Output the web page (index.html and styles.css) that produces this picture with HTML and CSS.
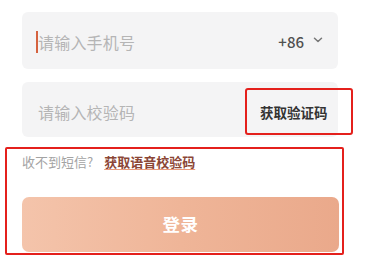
FILE: index.html
```html
<!DOCTYPE html>
<html lang="zh">
<head>
<meta charset="utf-8">
<link rel="stylesheet" href="styles.css">
</head>
<body>
<div class="form">
  <div class="field field-phone">
    <span class="cursor"></span>
    <span class="placeholder">请输入手机号</span>
    <span class="code">+86</span>
    <svg class="chev" width="10" height="6" viewBox="0 0 10 6"><path d="M1.5 1.2 L5 4.5 L8.5 1.2" fill="none" stroke="#777" stroke-width="1.5" stroke-linecap="round" stroke-linejoin="round"/></svg>
  </div>
  <div class="field field-verify">
    <span class="placeholder">请输入校验码</span>
    <span class="get-code">获取验证码</span>
  </div>
  <div class="mark-box">
    <div class="hint-row">
      <span class="hint">收不到短信?</span>
      <span class="voice-link">获取语音校验码</span>
    </div>
    <div class="login-btn">登录</div>
  </div>
</div>
</body>
</html>
```
FILE: styles.css
```css
* { box-sizing: border-box; }
html, body {
  margin: 0;
  padding: 0;
  background: #ffffff;
  font-family: "Noto Sans CJK SC", "Noto Sans", sans-serif;
}
.form {
  width: 367px;
  padding-top: 12px;
}
.field {
  margin-left: 22px;
  width: 316px;
  background: #f4f4f5;
  border-radius: 6px;
  display: flex;
  align-items: center;
}
.field-phone {
  height: 57px;
  padding: 2px 15px 0 14px;
}
.cursor {
  width: 2px;
  height: 22px;
  background: #d5623f;
}
.placeholder {
  font-size: 16px;
  color: #b5b5b5;
  line-height: 22px;
  flex: 1;
  letter-spacing: 0.2px;
}
.code {
  font-size: 15px;
  color: #505050;
  font-weight: 500;
  line-height: 20px;
}
.chev {
  margin-left: 9px;
  margin-top: -3px;
}
.field-verify {
  margin-top: 13px;
  height: 55px;
  padding-left: 16px;
}
.field-verify .placeholder { margin-top: 4px; }
.get-code {
  height: 47px;
  width: 108px;
  margin-right: -15px;
  margin-top: 4px;
  border: 2px solid #e4201c;
  border-radius: 3px;
  font-size: 13.5px;
  font-weight: 700;
  color: #333333;
  display: flex;
  align-items: center;
  padding-left: 13px;
}
.mark-box {
  margin-top: 10px;
  margin-left: 5px;
  width: 339px;
  height: 108px;
  border: 2px solid #e4201c;
  border-radius: 2px;
  padding: 2px 3px 0 15px;
}
.hint-row {
  display: flex;
  align-items: center;
  height: 20px;
  font-size: 13px;
}
.hint {
  color: #a3a3a3;
}
.voice-link {
  margin-left: 11px;
  color: #8b4636;
  font-weight: 700;
  text-decoration: underline;
  text-decoration-color: #e89a7c;
  text-underline-offset: 2px;
}
.login-btn {
  margin-top: 26px;
  height: 55px;
  border-radius: 7px;
  background: linear-gradient(90deg, #f4c4ab 0%, #efb598 50%, #eaa98b 100%);
  color: #ffffff;
  font-size: 17.5px;
  font-weight: 600;
  display: flex;
  align-items: center;
  justify-content: center;
  letter-spacing: 0.5px;
  padding-bottom: 3px;
}
```
